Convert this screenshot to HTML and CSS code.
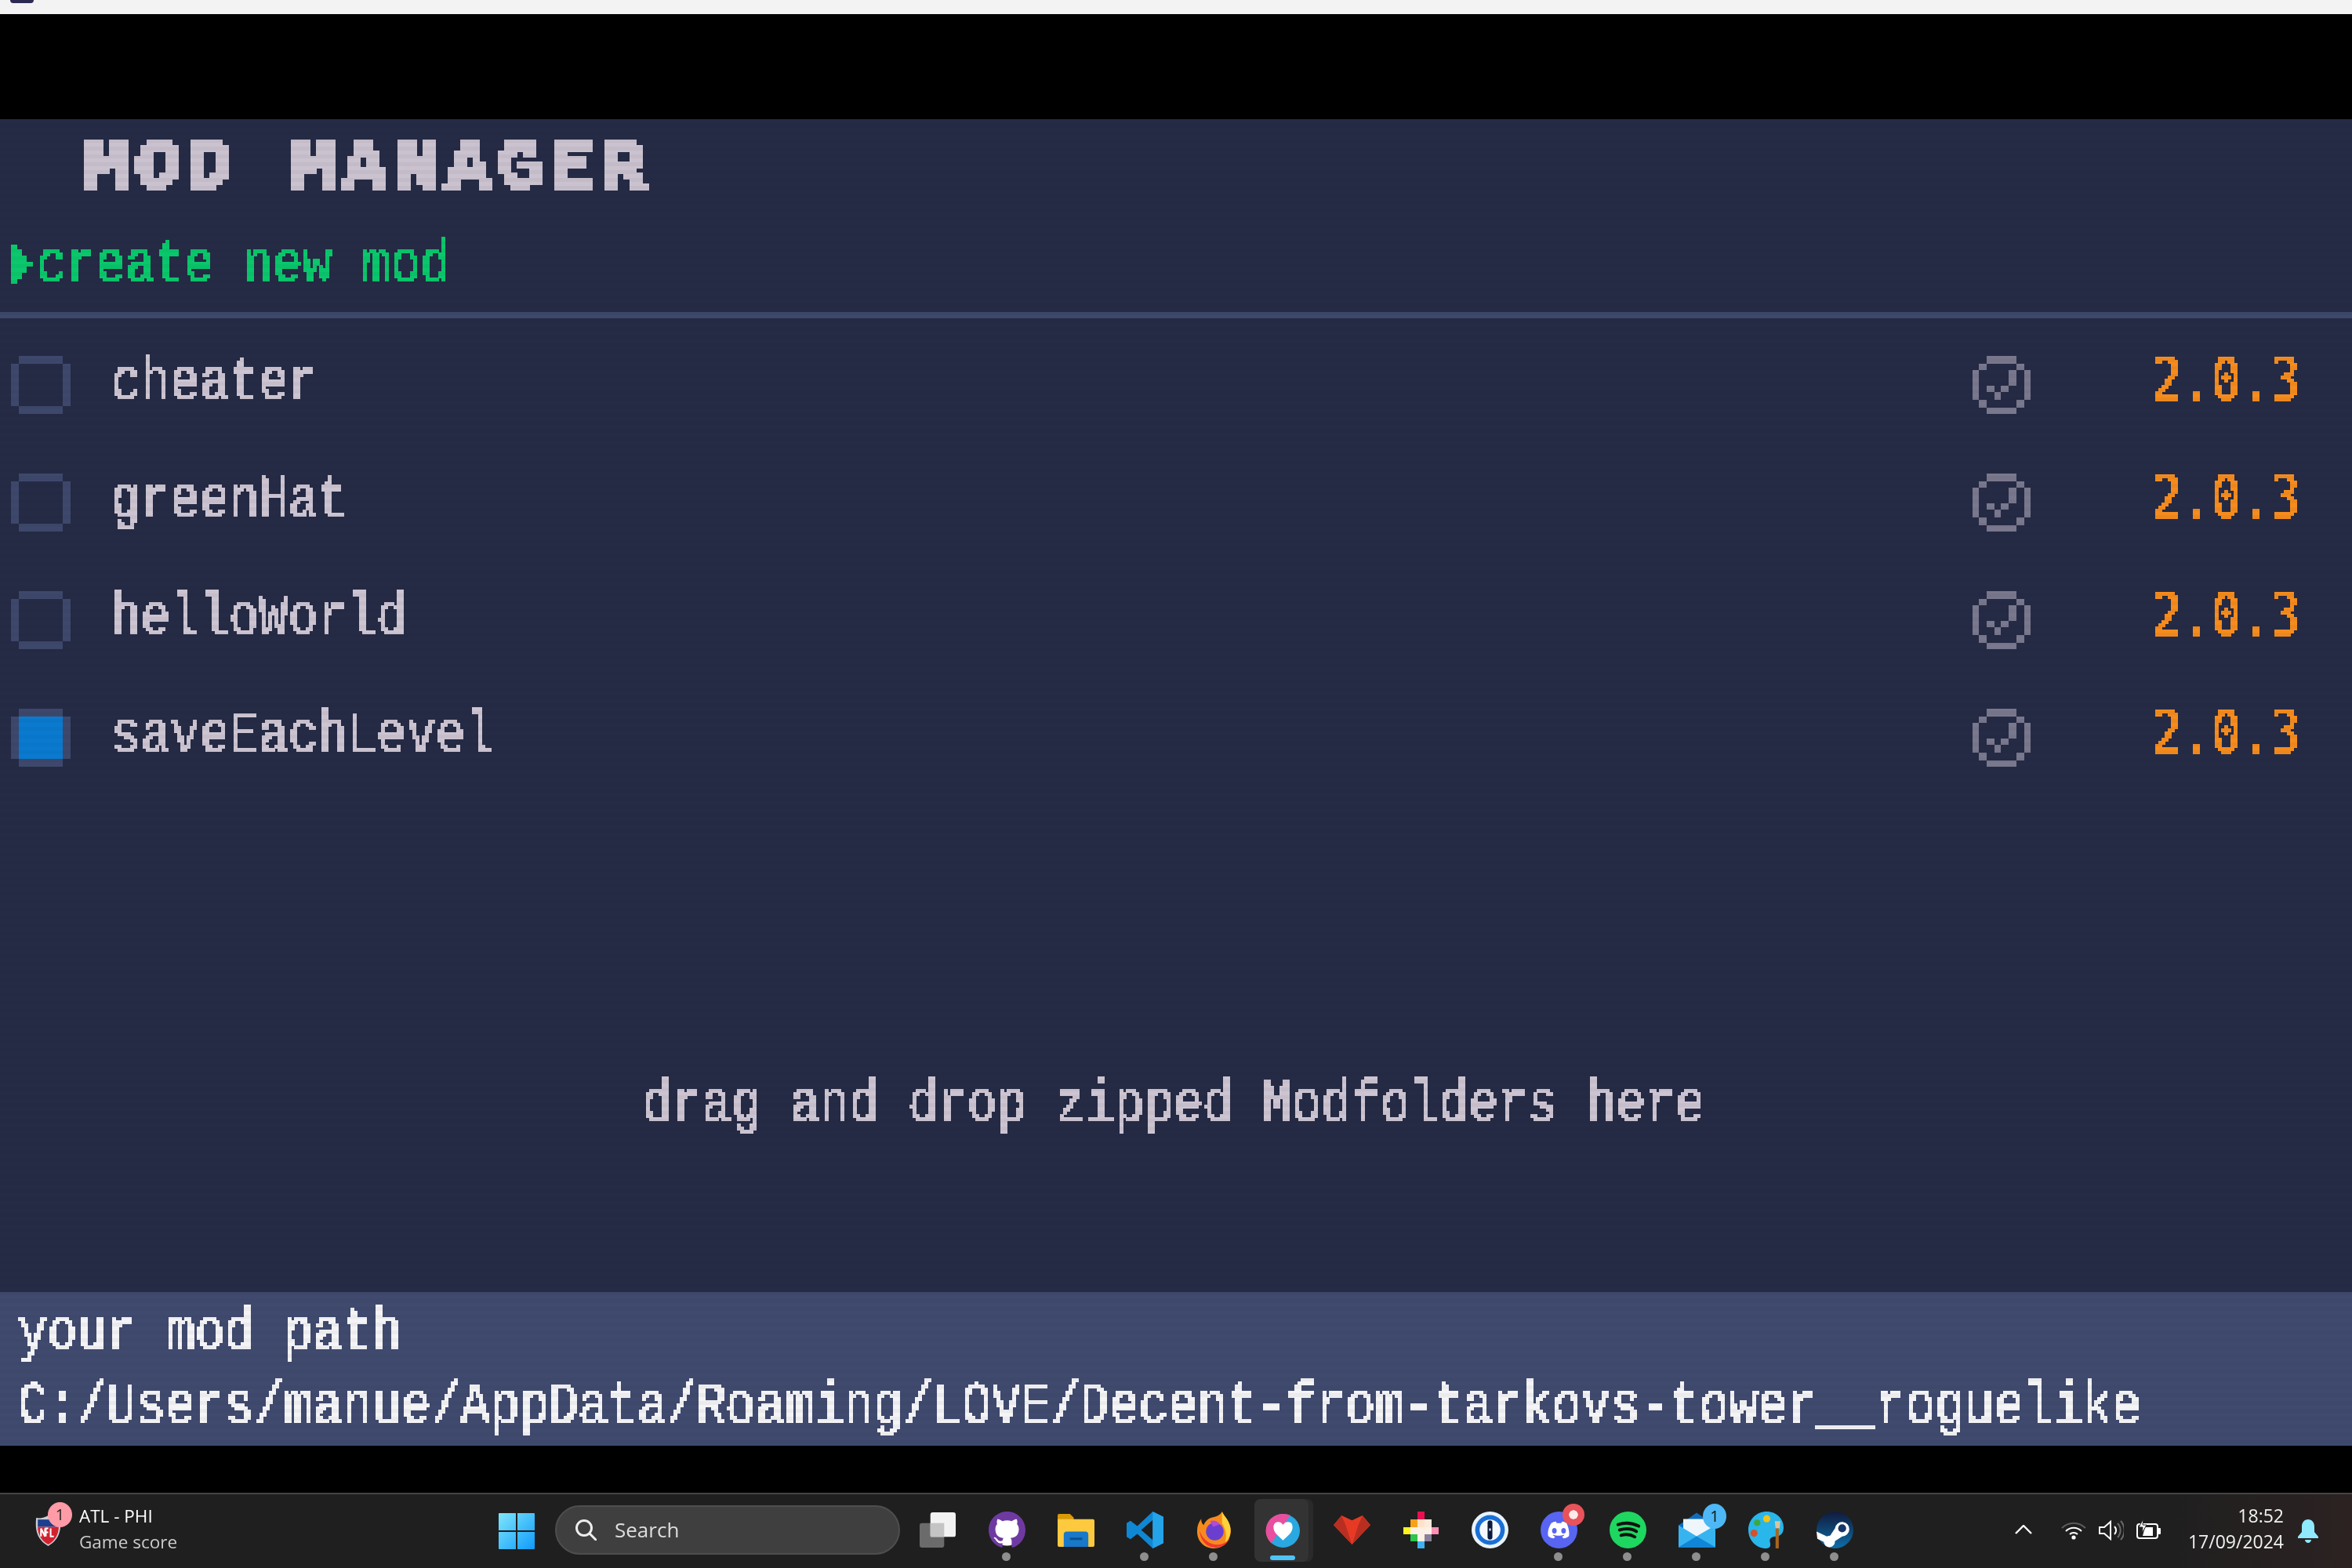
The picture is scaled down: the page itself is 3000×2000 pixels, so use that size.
FILE: index.html
```html
<!DOCTYPE html>
<html lang="en">
<head>
    <meta charset="UTF-8">
    <title>Mod Manager</title>
    <link rel="stylesheet" href="styles.css">
</head>
<body>
    <!-- pixel filter for the game text, and shared icons -->
    <svg class="defs" width="0" height="0">
        <defs>
            <filter id="pixelate" x="-2%" y="-30%" width="104%" height="160%" color-interpolation-filters="sRGB">
                <feFlood x="2" y="2" width="1" height="1"/>
                <feComposite width="4" height="4"/>
                <feTile result="grid"/>
                <feComposite in="SourceGraphic" in2="grid" operator="in"/>
                <feMorphology operator="dilate" radius="2"/>
                <feComponentTransfer>
                    <feFuncA type="discrete" tableValues="0 1 1 1"/>
                </feComponentTransfer>
            </filter>
            <filter id="pixelate-big" x="-2%" y="-30%" width="104%" height="160%" color-interpolation-filters="sRGB">
                <feFlood x="4" y="4" width="1" height="1"/>
                <feComposite width="8" height="8"/>
                <feTile result="grid"/>
                <feComposite in="SourceGraphic" in2="grid" operator="in"/>
                <feMorphology operator="dilate" radius="4"/>
                <feComponentTransfer>
                    <feFuncA type="discrete" tableValues="0 1 1"/>
                </feComponentTransfer>
            </filter>
            <symbol id="box" viewBox="0 0 76 74">
                <path d="M10 0h56v10H10zM0 10h10v54H0zM66 10h10v54H66zM10 64h56v10H10z"/>
            </symbol>
            <symbol id="tick" viewBox="0 0 74 74">
                <path d="M18 0h38v10H18zM8 10h10v8H8zM56 10h10v8H56zM0 18h8v38H0zM66 18h8v38h-8zM8 56h10v10H8zM56 56h10v10H56zM18 66h38v8H18zM46 18h10v20H46zM36 38h10v8H36zM28 46h8v10h-8zM18 38h10v8H18z"/>
            </symbol>
        </defs>
    </svg>

    <div class="titlebar"><span class="titlebar-icon"></span></div>
    <div class="letterbox-top"></div>

    <main class="game">
        <h1 class="title">MOD MANAGER</h1>

        <div class="create-row">
            <svg class="arrow" viewBox="0 0 28 50"><path d="M0 0h8v6h6v8h6v8h8v6h-8v8h-6v8H8v6H0z"/></svg>
            <span class="pixel create-label">create new mod</span>
        </div>

        <div class="divider"></div>

        <div class="mod-list">
            <div class="mod-row">
                <svg class="checkbox"><use href="#box"/></svg>
                <span class="pixel mod-name">cheater</span>
                <svg class="status"><use href="#tick"/></svg>
                <span class="pixel version">2.0.3</span>
            </div>
            <div class="mod-row">
                <svg class="checkbox"><use href="#box"/></svg>
                <span class="pixel mod-name">greenHat</span>
                <svg class="status"><use href="#tick"/></svg>
                <span class="pixel version">2.0.3</span>
            </div>
            <div class="mod-row">
                <svg class="checkbox"><use href="#box"/></svg>
                <span class="pixel mod-name">helloWorld</span>
                <svg class="status"><use href="#tick"/></svg>
                <span class="pixel version">2.0.3</span>
            </div>
            <div class="mod-row">
                <svg class="checkbox checked"><use href="#box"/></svg>
                <span class="pixel mod-name">saveEachLevel</span>
                <svg class="status"><use href="#tick"/></svg>
                <span class="pixel version">2.0.3</span>
            </div>
        </div>

        <div class="hint"><span class="pixel">drag and drop zipped Modfolders here</span></div>

        <div class="path-bar">
            <span class="pixel path-line">your mod path</span>
            <span class="pixel path-line">C:/Users/manue/AppData/Roaming/LOVE/Decent-from-tarkovs-tower__roguelike</span>
        </div>
    </main>

    <div class="letterbox-bottom"></div>

    <footer class="taskbar">
        <div class="widget">
            <svg class="nfl" viewBox="0 0 34 40">
                <path d="M2 4c5 1 10 0 15-3 5 3 10 4 15 3 1 12 1 26-15 35C1 30 1 16 2 4z" fill="#c9ced6"/>
                <path d="M4 6h26v9H4z" fill="#1d3f8f"/>
                <path d="M4 15h26c0 9-4 17-13 22C8 32 4 24 4 15z" fill="#d3202e"/>
                <path d="M8 17v10M8 17l5 10V17M17 17h-3v10M14 22h3M20 17v10h4" stroke="#fff" stroke-width="2" fill="none"/>
            </svg>
            <span class="widget-badge">1</span>
            <div class="widget-text">
                <span class="widget-title">ATL - PHI</span>
                <span class="widget-sub">Game score</span>
            </div>
        </div>

        <svg class="start" viewBox="0 0 46 46">
            <defs>
                <linearGradient id="win" x1="0" y1="0" x2="1" y2="1">
                    <stop offset="0" stop-color="#7fe6fb"/>
                    <stop offset="1" stop-color="#0f9bfb"/>
                </linearGradient>
            </defs>
            <path d="M0 1a1 1 0 0 1 1-1h21v22H0zM24 0h21a1 1 0 0 1 1 1v21H24zM0 24h22v22H1a1 1 0 0 1-1-1zM24 24h22v21a1 1 0 0 1-1 1H24z" fill="url(#win)"/>
        </svg>

        <div class="search">
            <svg class="search-icon" viewBox="0 0 28 28"><circle cx="12" cy="12" r="9.5" fill="none" stroke="#eee" stroke-width="3"/><path d="M19 19l8 8" stroke="#eee" stroke-width="3" stroke-linecap="round"/></svg>
            <span>Search</span>
        </div>

        <div class="apps">
            <div class="app">
                <svg viewBox="0 0 48 46"><rect x="0" y="14" width="32" height="32" rx="3" fill="#6b6b6b"/><rect x="14" y="0" width="33" height="32" rx="3" fill="#f2f2f2"/><path d="M14 14h18v18H14z" fill="#c4c4c4"/></svg>
            </div>
            <div class="app running">
                <svg viewBox="0 0 16 16"><circle cx="8" cy="8" r="6.8" fill="#fff"/><path fill="#6e3aa2" d="M8 0C3.58 0 0 3.58 0 8c0 3.54 2.29 6.53 5.47 7.59.4.07.55-.17.55-.38 0-.19-.01-.82-.01-1.49-2.01.37-2.53-.49-2.69-.94-.09-.23-.48-.94-.82-1.13-.28-.15-.68-.52-.01-.53.63-.01 1.08.58 1.23.82.72 1.21 1.87.87 2.33.66.07-.52.28-.87.51-1.07-1.78-.2-3.64-.89-3.64-3.95 0-.87.31-1.59.82-2.15-.08-.2-.36-1.02.08-2.12 0 0 .67-.21 2.2.82.64-.18 1.32-.27 2-.27.68 0 1.36.09 2 .27 1.53-1.04 2.2-.82 2.2-.82.44 1.1.16 1.92.08 2.12.51.56.82 1.27.82 2.15 0 3.07-1.87 3.75-3.65 3.95.29.25.54.73.54 1.48 0 1.07-.01 1.93-.01 2.2 0 .21.15.46.55.38A8.013 8.013 0 0016 8c0-4.42-3.58-8-8-8z"/></svg>
            </div>
            <div class="app">
                <svg viewBox="0 0 48 44"><path d="M0 3a2 2 0 0 1 2-2h14l5 5v6H0z" fill="#d99a07"/><path d="M0 8h46a2 2 0 0 1 2 2v32a2 2 0 0 1-2 2H2a2 2 0 0 1-2-2z" fill="#fcc93f"/><path d="M8 44V28a4 4 0 0 1 4-4h24a4 4 0 0 1 4 4v16z" fill="#1878c9"/><rect x="16" y="32" width="16" height="3" fill="#0d4f8c"/></svg>
            </div>
            <div class="app running">
                <svg viewBox="0 0 48 48"><path d="M34 0l14 7v34l-14 7-20-19-9 7-5-3V15l5-3 9 7z" fill="#0f87d2"/><path d="M34 11v26L19 24z" fill="#1f1f1f"/><path d="M34 0l14 7v34l-14 7z" fill="#25a3e8"/></svg>
            </div>
            <div class="app running">
                <svg viewBox="0 0 44 46"><path d="M32 0c2 5 8 10 10 18 4 14-6 28-20 28C9 46 0 36 1 23c0-5 2-10 5-14 0 4 1 6 3 8 2-5 6-9 12-10 5-1 9-3 11-7z" fill="#f78a1d"/><path d="M32 0c2 5 8 10 10 18 2 9-1 16-6 21 2-8 1-17-4-24z" fill="#ffd23a"/><path d="M4 24c1 12 9 21 20 21 8 0 14-4 18-12-5 7-12 9-19 8-9-1-16-8-19-17z" fill="#f0392f"/><circle cx="23" cy="25" r="11" fill="#6a3fd0"/><path d="M17 12c5-2 10 0 12 4l-8 3z" fill="#b34bd6"/></svg>
            </div>
            <div class="app active">
                <svg viewBox="0 0 46 46"><circle cx="23" cy="23" r="23" fill="#2aa8e0"/><path d="M23 0a23 23 0 0 0-16 40L33 2a23 23 0 0 0-10-2z" fill="#e84f9f"/><path d="M23 36C15 29 10 25 10 18c0-4 3-7 6-7 3 0 5 1 7 4 2-3 4-4 7-4 4 0 6 3 6 7 0 7-5 11-13 18z" fill="#fff"/></svg>
            </div>
            <div class="app">
                <svg viewBox="0 0 46 36"><path d="M10 0l13 6 13-6 10 12-23 24L0 12z" fill="#e73a25"/><path d="M10 0l6 14 7 22L0 12zM36 0l10 12-23 24 7-22z" fill="#b82f22"/><path d="M16 14l7-8 7 8-7 22z" fill="#e73a25"/></svg>
            </div>
            <div class="app pixel-app">
                <svg viewBox="0 0 45 46" shape-rendering="crispEdges"><rect x="18" y="0" width="9" height="10" fill="#e8104f"/><rect x="9" y="10" width="9" height="10" fill="#f7a11a"/><rect x="18" y="10" width="9" height="10" fill="#ffe3c8"/><rect x="27" y="10" width="9" height="10" fill="#ffe9dc"/><rect x="0" y="20" width="9" height="8" fill="#fff21e"/><rect x="9" y="20" width="27" height="8" fill="#fff0e6"/><rect x="36" y="20" width="9" height="8" fill="#ff8fb4"/><rect x="9" y="28" width="9" height="9" fill="#2fc44b"/><rect x="18" y="28" width="9" height="9" fill="#fff0e6"/><rect x="27" y="28" width="9" height="9" fill="#8a7f9c"/><rect x="18" y="37" width="9" height="9" fill="#3fb1f0"/></svg>
            </div>
            <div class="app">
                <svg viewBox="0 0 46 46"><circle cx="23" cy="23" r="23" fill="#eaf3fd"/><circle cx="23" cy="23" r="18.5" fill="#1a6fd6"/><circle cx="23" cy="23" r="13" fill="#f4f8fe"/><rect x="20" y="11" width="6" height="24" rx="3" fill="#0b1a3a"/><rect x="22" y="21" width="2" height="3" fill="#f4f8fe"/></svg>
            </div>
            <div class="app running">
                <svg viewBox="0 0 48 48"><circle cx="24" cy="24" r="24" fill="#5865f2"/><path d="M34 15c-2-1-4-2-6-2l-1 2c-2 0-4 0-6 0l-1-2c-2 0-4 1-6 2-4 6-5 12-4 17 2 2 5 3 7 3l2-2-3-2 1-1c4 2 9 2 13 0l1 1-3 2 2 2c2 0 5-1 7-3 1-6-1-12-3-17z" fill="#fff"/><ellipse cx="18" cy="25" rx="3" ry="3.6" fill="#5865f2"/><ellipse cx="30" cy="25" rx="3" ry="3.6" fill="#5865f2"/></svg>
                <span class="app-badge red"></span>
            </div>
            <div class="app running">
                <svg viewBox="0 0 48 48"><circle cx="24" cy="24" r="24" fill="#1ed760"/><path d="M11 17c9-3 19-2 27 2M13 24c7-2 16-2 22 2M15 31c6-2 13-1 18 2" fill="none" stroke="#111" stroke-width="4" stroke-linecap="round"/></svg>
            </div>
            <div class="app running">
                <svg viewBox="0 0 47 44"><path d="M0 16L23 0l24 16v28H0z" fill="#0f6cbd"/><path d="M6 8h35v22L23 38 6 30z" fill="#eef6fc"/><path d="M0 16l23 14 24-14v28H0z" fill="#37b4f0"/><path d="M0 44l23-14 24 14z" fill="#1186d8"/></svg>
                <span class="app-badge blue">1</span>
            </div>
            <div class="app running">
                <svg viewBox="0 0 44 46"><path d="M23 0C10 0 0 10 0 23s10 23 22 23c6 0 6-4 5-8s2-7 7-7c6 0 10-4 10-11C44 9 35 0 23 0z" fill="#29b6ea"/><circle cx="23" cy="9" r="4.5" fill="#f3c11b"/><circle cx="11" cy="14" r="4" fill="#3fa83c"/><circle cx="7" cy="27" r="4.5" fill="#d8502a"/><path d="M33 12h7l-1 9h-5z" fill="#d9c3a0"/><rect x="34" y="21" width="4" height="25" fill="#a8651e"/></svg>
            </div>
            <div class="app running">
                <svg viewBox="0 0 46 46"><defs><linearGradient id="steam" x1="0" y1="0" x2="0" y2="1"><stop offset="0" stop-color="#101a3c"/><stop offset="1" stop-color="#0f6ea8"/></linearGradient></defs><circle cx="23" cy="23" r="23" fill="url(#steam)"/><path d="M0 25l13 6a8 8 0 0 1 4-1l6-9a9 9 0 1 1 9 10l-9 6a7 7 0 0 1-14 1L1 34z" fill="#fff"/><circle cx="32" cy="21" r="5" fill="#17356a"/></svg>
            </div>
        </div>

        <div class="tray">
            <svg class="tray-chevron" viewBox="0 0 22 12"><path d="M1 11l10-10 10 10" fill="none" stroke="#fff" stroke-width="2.4"/></svg>
            <svg class="tray-wifi" viewBox="0 0 32 24"><path d="M1 9a21 21 0 0 1 30 0" fill="none" stroke="#5c5c5c" stroke-width="2"/><path d="M6 13a14 14 0 0 1 20 0M11 17a7 7 0 0 1 10 0" fill="none" stroke="#fff" stroke-width="2"/><circle cx="16" cy="21" r="2.6" fill="#fff"/></svg>
            <svg class="tray-volume" viewBox="0 0 32 28"><path d="M1 10h6l8-7v22l-8-7H1z" fill="none" stroke="#fff" stroke-width="2"/><path d="M20 9a7 7 0 0 1 0 10" fill="none" stroke="#fff" stroke-width="2"/><path d="M24 5a13 13 0 0 1 0 18M28 2a18 18 0 0 1 0 24" fill="none" stroke="#6a6a6a" stroke-width="2"/></svg>
            <svg class="tray-battery" viewBox="0 0 32 26"><rect x="1" y="7" width="26" height="18" rx="3" fill="none" stroke="#fff" stroke-width="2"/><rect x="27" y="12" width="4" height="8" rx="1" fill="#fff"/><path d="M11 11h10v11H8z" fill="#fff"/><path d="M9 0L3 11h5l-1 8 6-11H8z" fill="#fff" stroke="#1f1f1f" stroke-width="1"/></svg>
            <div class="clock">
                <span>18:52</span>
                <span>17/09/2024</span>
            </div>
            <svg class="bell" viewBox="0 0 26 30"><path d="M13 0c-5 0-8 4-8 9v7l-5 6v2h26v-2l-5-6V9c0-5-3-9-8-9z" fill="#8fe9ff"/><path d="M9 26h8c0 2-2 4-4 4s-4-2-4-4z" fill="#8fe9ff"/></svg>
        </div>
    </footer>
</body>
</html>
```

FILE: styles.css
```css
/* Page frame */
html, body {
    margin: 0;
    padding: 0;
}

body {
    width: 3000px;
    height: 2000px;
    background-color: #000000;
    display: flex;
    flex-direction: column;
    overflow: hidden;
}

.defs {
    position: absolute;
}

.titlebar {
    height: 18px;
    background-color: #f3f3f3;
}

.titlebar-icon {
    display: block;
    width: 30px;
    height: 4px;
    margin-left: 13px;
    background-color: #2d2a52;
    border-radius: 0 0 4px 4px;
}

.letterbox-top {
    height: 134px;
}

.letterbox-bottom {
    height: 60px;
}

/* Game screen */
.game {
    position: relative;
    height: 1692px;
    background-color: #252b45;
    display: flex;
    flex-direction: column;
}

/* Scanlines lie over the whole screen */
.game::after {
    content: "";
    position: absolute;
    inset: 0;
    pointer-events: none;
    mix-blend-mode: multiply;
    background: repeating-linear-gradient(to bottom, #ffffff 0, #ffffff 5px, #f6f6f6 5px, #f6f6f6 10px);
}

.pixel {
    display: block;
    height: 64px;
    font-family: "Liberation Mono", monospace;
    font-size: 62.7px;
    line-height: 64px;
    white-space: pre;
    color: #cdc4d2;
    transform: scaleY(1.2);
    transform-origin: left top;
    filter: url(#pixelate);
}

.title {
    margin: 29px 0 0 107px;
    height: 64px;
    font-family: "Liberation Mono", monospace;
    font-size: 94px;
    font-weight: bold;
    line-height: 64px;
    letter-spacing: 9.6px;
    white-space: pre;
    color: #cbc2d0;
    -webkit-text-stroke: 3px currentColor;
    transform: scaleY(0.94);
    transform-origin: left bottom;
    filter: url(#pixelate-big);
}

.create-row {
    display: flex;
    margin-top: 56px;
    padding-left: 14px;
    height: 64px;
}

.arrow {
    width: 28px;
    height: 50px;
    margin-top: 11px;
    fill: #0bc86d;
}

.create-label {
    margin-left: 5px;
    color: #0ac76c;
}

.divider {
    height: 8px;
    margin-top: 33px;
    background-color: #3e486c;
}

.mod-list {
    padding-top: 45px;
}

.mod-row {
    display: flex;
    height: 150px;
    padding-left: 14px;
}

.checkbox {
    width: 76px;
    height: 74px;
    margin-top: 3px;
    fill: #3e486c;
}

.checked {
    background: linear-gradient(#0a7ad0, #0a7ad0) center / 56px 54px no-repeat;
}

.mod-name {
    margin-left: 52px;
}

.status {
    width: 74px;
    height: 74px;
    margin-top: 3px;
    margin-left: auto;
    fill: #7a788e;
}

.version {
    margin-left: 155px;
    margin-top: -5px;
    width: 188px;
    margin-right: 67px;
    font-family: "DejaVu Sans Mono", monospace;
    font-size: 62.7px;
    color: #f68c1e;
}

.hint {
    display: flex;
    justify-content: center;
    margin-top: 321px;
    padding-right: 6px;
    color: #cdc4d2;
}

.path-bar {
    margin-top: auto;
    height: 196px;
    box-sizing: border-box;
    padding: 15px 0 0 23px;
    background-color: #404a6f;
    display: flex;
    flex-direction: column;
    gap: 30px;
}

.path-line {
    color: #f4f4f6;
}

/* Windows taskbar */
.taskbar {
    position: relative;
    height: 96px;
    box-sizing: border-box;
    border-top: 2px solid #444444;
    background: linear-gradient(to right, #1f1f1f 0, #1f1f1f 2760px, #2c2222 3000px);
    display: flex;
    font-family: "Open Sans", "Noto Sans", sans-serif;
    color: #ffffff;
}

.widget {
    position: relative;
    width: 636px;
    flex: none;
}

.nfl {
    position: absolute;
    left: 44px;
    top: 26px;
    width: 35px;
    height: 41px;
}

.widget-badge {
    position: absolute;
    left: 61px;
    top: 10px;
    width: 31px;
    height: 32px;
    border-radius: 50%;
    background-color: #ff9ba6;
    color: #1f1f1f;
    font-size: 20px;
    line-height: 32px;
    text-align: center;
}

.widget-text {
    display: flex;
    flex-direction: column;
    padding: 11px 0 0 101px;
}

.widget-title {
    font-size: 22.5px;
    line-height: 33px;
}

.widget-sub {
    font-size: 22.5px;
    line-height: 33px;
    color: #cccccc;
}

.start {
    width: 46px;
    height: 46px;
    margin-top: 24px;
    flex: none;
}

.search {
    width: 440px;
    height: 63px;
    margin: 14px 0 0 26px;
    box-sizing: border-box;
    border: 2px solid #4e4e4e;
    border-radius: 32px;
    background-color: #3f3f3f;
    display: flex;
    align-items: center;
    padding-left: 23px;
    padding-bottom: 2px;
    font-size: 26px;
    color: #dddddd;
    flex: none;
}

.search-icon {
    width: 28px;
    height: 28px;
    margin-right: 23px;
}

.apps {
    display: flex;
    margin-left: 4px;
}

.app {
    position: relative;
    width: 88px;
    height: 94px;
    display: flex;
    justify-content: center;
    padding-top: 22px;
    box-sizing: border-box;
}

.app svg {
    width: 47px;
    height: 47px;
}

/* Running indicator */
.running::after {
    content: "";
    position: absolute;
    left: 38px;
    top: 74px;
    width: 11px;
    height: 11px;
    border-radius: 50%;
    background-color: #8e8e8e;
}

.active::before {
    content: "";
    position: absolute;
    left: 8px;
    top: 6px;
    width: 69px;
    height: 80px;
    border-radius: 8px;
    background-color: #333333;
    box-shadow: 6px 0 0 #2a2a2a;
}

.active svg {
    position: relative;
    height: 43px;
    margin-top: 3px;
}

.active::after {
    content: "";
    position: absolute;
    left: 28px;
    top: 78px;
    width: 32px;
    height: 6px;
    border-radius: 3px;
    background-color: #4fc3f7;
}

.app-badge {
    position: absolute;
    border-radius: 50%;
    text-align: center;
    color: #111111;
}

.red {
    left: 49px;
    top: 12px;
    width: 28px;
    height: 28px;
    background-color: #e8535a;
    box-sizing: border-box;
    border: 8px solid #e8535a;
    background-clip: padding-box;
    background-image: linear-gradient(#ffe9e9, #ffe9e9);
}

.blue {
    left: 52px;
    top: 12px;
    width: 30px;
    height: 32px;
    background-color: #4db8f5;
    font-size: 20px;
    line-height: 32px;
}

.tray {
    position: relative;
    flex: 1;
}

.tray svg {
    position: absolute;
}

.tray-chevron {
    left: 186px;
    top: 39px;
    width: 22px;
    height: 12px;
}

.tray-wifi {
    left: 245px;
    top: 34px;
    width: 32px;
    height: 24px;
}

.tray-volume {
    left: 293px;
    top: 32px;
    width: 32px;
    height: 28px;
}

.tray-battery {
    left: 341px;
    top: 31px;
    width: 32px;
    height: 26px;
}

.clock {
    position: absolute;
    right: 87px;
    top: 11px;
    display: flex;
    flex-direction: column;
    align-items: flex-end;
    font-size: 23px;
    line-height: 33px;
    color: #f2f2f2;
}

.bell {
    left: 547px;
    top: 32px;
    width: 26px;
    height: 30px;
}
```
